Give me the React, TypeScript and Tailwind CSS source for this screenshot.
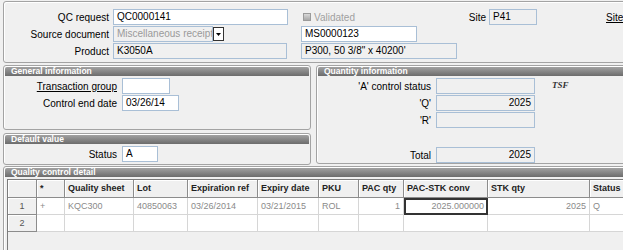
import React from "react";

const field =
  "h-[16px] border border-[#a9bfd6] px-[3px] leading-[14px] whitespace-nowrap overflow-hidden shrink-0";

function Panel({
  title,
  className,
  children,
}: {
  title: string;
  className: string;
  children?: React.ReactNode;
}) {
  return (
    <div
      className={`border border-[#a3a3a3] rounded-[3px] bg-[#f0f0f0] shadow-[inset_1px_1px_0_#fff] ${className}`}
    >
      <div className="mx-[1px] mt-[1px] h-[9px] rounded-t-[2px] bg-linear-to-b from-[#a2a2a2] to-[#6c6c6c] pl-[6px] text-[8.5px] font-bold leading-[9px] text-white whitespace-nowrap overflow-hidden">
        {title}
      </div>
      {children}
    </div>
  );
}

const cols = "grid grid-cols-[29px_28px_69px_54px_70px_61px_40px_45px_84px_102px_50px]";
const head =
  "h-[18px] bg-[#f0f0f0] border-r border-b border-[#8c8c8c] shadow-[inset_1px_1px_0_#fff] font-bold text-[9px] px-[3px] leading-[17px] whitespace-nowrap overflow-hidden text-[#222]";
const num =
  "h-[17px] bg-[#f0f0f0] border-r border-b border-[#8c8c8c] shadow-[inset_1px_1px_0_#fff] text-center leading-[16px] text-[#555] text-[9px]";
const cell =
  "h-[17px] bg-white border-r border-b border-[#d6d6d6] px-[3px] leading-[16px] text-[#8a8a8a] text-[9px] whitespace-nowrap overflow-hidden font-['Liberation_Sans_Narrow','Liberation_Sans',sans-serif]";

export default function App() {
  const headers = ["", "*", "Quality sheet", "Lot", "Expiration ref", "Expiry date", "PKU", "PAC qty", "PAC-STK conv", "STK qty", "Status"];

  return (
    <div className="w-[623px] h-[250px] overflow-hidden bg-[#f0f0f0] pl-[3px] pt-[1px] text-[10px] text-black font-['Liberation_Sans',Arial,sans-serif]">
      {/* top block */}
      <div className="w-[640px] h-[62px] border border-[#a3a3a3] rounded-[3px] shadow-[inset_1px_1px_0_#fff] pt-[7px] flex flex-col gap-[1px]">
        <div className="flex h-[16px] items-center">
          <div className="w-[105px] text-right">QC request</div>
          <div className={`${field} ml-[4px] w-[175px] bg-white`}>QC0000141</div>
          <div className="w-[198px] flex items-center">
            <span className="ml-[15px] w-[8px] h-[8px] border border-[#9a9a9a] bg-linear-to-b from-[#d8d8d8] to-[#a8a8a8]" />
            <span className="ml-[3px] text-[#a0a0a0]">Validated</span>
            <span className="ml-auto">Site</span>
          </div>
          <div className={`${field} ml-[3px] w-[48px] bg-[#f0f0f0]`}>P41</div>
          <span className="ml-[69px] underline">Site</span>
        </div>
        <div className="flex h-[16px] items-center">
          <div className="w-[105px] text-right">Source document</div>
          <div className={`${field} ml-[4px] w-[100px] bg-[#f0f0f0] text-[#9a9a9a]`}>Miscellaneous receipt</div>
          <div className="w-[11px] h-[14px] border border-[#333] bg-white flex items-center justify-center">
            <svg width="5" height="3" viewBox="0 0 5 3">
              <path d="M0 0h5L2.5 3z" fill="#000" />
            </svg>
          </div>
          <div className={`${field} ml-[77px] w-[116px] bg-white`}>MS0000123</div>
        </div>
        <div className="flex h-[16px] items-center">
          <div className="w-[105px] text-right">Product</div>
          <div className={`${field} ml-[4px] w-[174px] bg-[#f0f0f0]`}>K3050A</div>
          <div className={`${field} ml-[14px] w-[156px] bg-[#f0f0f0]`}>P300, 50 3/8" x 40200'</div>
        </div>
      </div>

      {/* middle */}
      <div className="flex mt-[2px] gap-[5px]">
        <div className="w-[308px] shrink-0 flex flex-col gap-[3px]">
          <Panel title="General information" className="h-[65px]">
            <div className="mt-[2px] flex flex-col gap-[1px]">
              <div className="flex h-[16px] items-center">
                <div className="w-[113px] text-right underline">Transaction group</div>
                <div className={`${field} ml-[5px] w-[48px] bg-white`} />
              </div>
              <div className="flex h-[16px] items-center">
                <div className="w-[113px] text-right">Control end date</div>
                <div className={`${field} ml-[5px] w-[57px] bg-white`}>03/26/14</div>
              </div>
            </div>
          </Panel>
          <Panel title="Default value" className="h-[32px]">
            <div className="mt-[2px] flex h-[16px] items-center">
              <div className="w-[113px] text-right">Status</div>
              <div className={`${field} ml-[5px] w-[36px] bg-white`}>A</div>
            </div>
          </Panel>
        </div>
        <Panel title="Quantity information" className="w-[320px] shrink-0 h-[99px]">
          <div className="mt-[2px] flex flex-col gap-[1px]">
            <div className="flex h-[16px] items-center">
              <div className="w-[114px] text-right">'A' control status</div>
              <div className={`${field} ml-[5px] w-[99px] bg-[#f0f0f0]`} />
              <span className="ml-[17px] italic font-bold text-[9px] text-[#333] font-['Liberation_Serif',serif]">TSF</span>
            </div>
            <div className="flex h-[16px] items-center">
              <div className="w-[114px] text-right">'Q'</div>
              <div className={`${field} ml-[5px] w-[99px] bg-[#f0f0f0] text-right`}>2025</div>
            </div>
            <div className="flex h-[16px] items-center">
              <div className="w-[114px] text-right">'R'</div>
              <div className={`${field} ml-[5px] w-[99px] bg-[#f0f0f0]`} />
            </div>
            <div className="flex h-[16px] items-center mt-[18px]">
              <div className="w-[114px] text-right">Total</div>
              <div className={`${field} ml-[5px] w-[99px] bg-[#f0f0f0] text-right`}>2025</div>
            </div>
          </div>
        </Panel>
      </div>

      {/* detail */}
      <Panel title="Quality control detail" className="mt-[1px] w-[640px] h-[100px]">
        <div className="ml-[3px] mt-[2px] h-[80px] border-l border-t border-[#7c7c7c] bg-[#f0f0f0]">
          <div className={cols}>
            {headers.map((h, i) => (
              <div key={i} className={head}>
                {h}
              </div>
            ))}
          </div>
          <div className={cols}>
            <div className={num}>1</div>
            <div className={cell}>+</div>
            <div className={cell}>KQC300</div>
            <div className={cell}>40850063</div>
            <div className={cell}>03/26/2014</div>
            <div className={cell}>03/21/2015</div>
            <div className={cell}>ROL</div>
            <div className={`${cell} text-right`}>1</div>
            <div className="h-[17px] bg-white border-2 border-[#333] px-[2px] leading-[13px] text-right text-[#8a8a8a] text-[9px] font-['Liberation_Sans_Narrow','Liberation_Sans',sans-serif]">
              2025.000000
            </div>
            <div className={`${cell} text-right`}>2025</div>
            <div className={cell}>Q</div>
          </div>
          <div className={cols}>
            <div className={num}>2</div>
            {Array.from({ length: 10 }).map((_, i) => (
              <div key={i} className={cell} />
            ))}
          </div>
        </div>
      </Panel>
    </div>
  );
}
